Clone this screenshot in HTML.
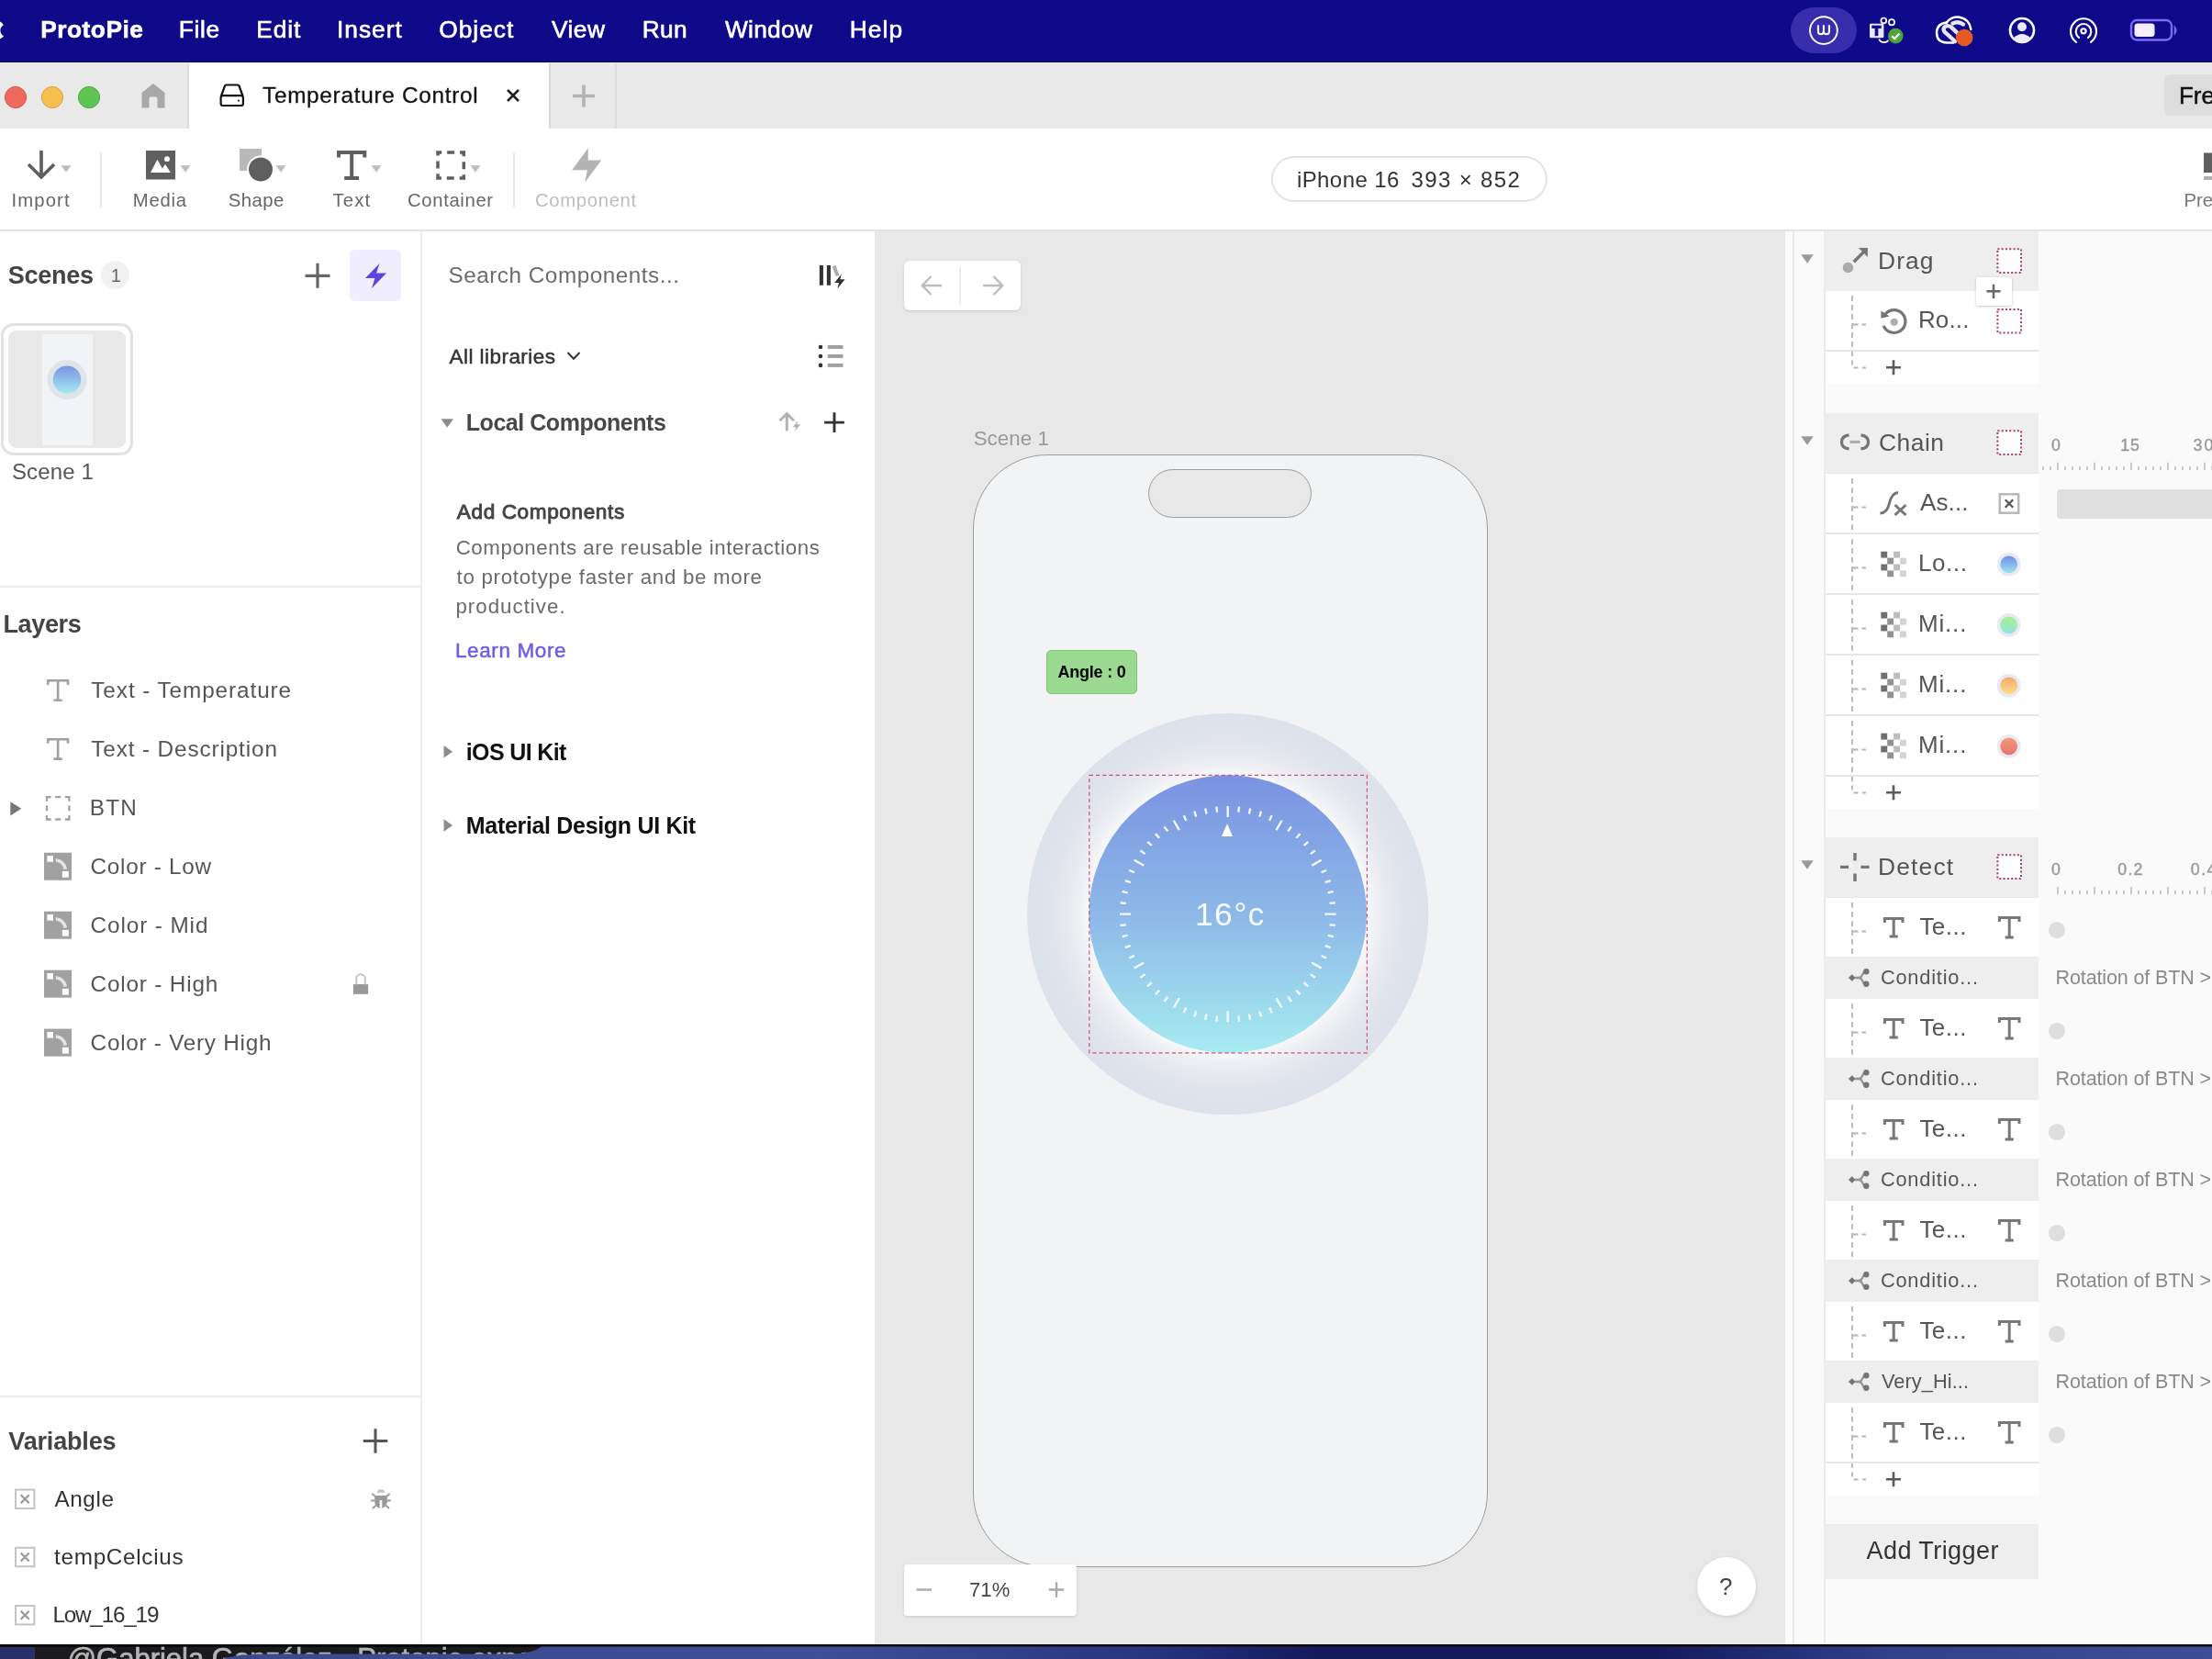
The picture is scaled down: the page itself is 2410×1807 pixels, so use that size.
<!DOCTYPE html>
<html lang="en"><head><meta charset="utf-8"><title>ProtoPie - Temperature Control</title>
<style>
html,body{margin:0;padding:0;}
body{width:2410px;height:1807px;overflow:hidden;background:#fff;position:relative;font-family:"Liberation Sans",sans-serif;}
#app div{position:absolute;box-sizing:border-box;}
#ov{position:absolute;left:0;top:0;will-change:transform;}
#ov text{font-family:"Liberation Sans",sans-serif;white-space:pre;}
</style></head><body>
<div id="app">
<div style="left:0px;top:0px;width:2410px;height:67px;background:#0f0a8a;"></div>
<div style="left:0px;top:66.5px;width:2410px;height:1.5px;background:#0a0745;"></div>
<div style="left:0px;top:68px;width:2410px;height:1.2000000000000028px;background:#f1f1f6;"></div>
<div style="left:1951px;top:8px;width:72px;height:50px;background:rgba(120,105,235,.38);border-radius:25px;"></div>
<div style="left:0px;top:69.2px;width:2410px;height:70.8px;background:#e9e9e9;"></div>
<div style="left:205px;top:69px;width:394px;height:71px;background:#ffffff;"></div>
<div style="left:204px;top:69px;width:2px;height:71px;background:#dcdcdc;"></div>
<div style="left:598px;top:69px;width:2px;height:71px;background:#d8d8d8;"></div>
<div style="left:670px;top:69px;width:2px;height:71px;background:#dadada;"></div>
<div style="left:2358px;top:81px;width:72px;height:45px;background:#dddddd;border-radius:6px;"></div>
<div style="left:0px;top:140px;width:2410px;height:110px;background:#ffffff;"></div>
<div style="left:0px;top:250px;width:2410px;height:2px;background:#e4e4e4;"></div>
<div style="left:109px;top:166px;width:2px;height:60px;background:#e6e6e6;"></div>
<div style="left:559px;top:166px;width:2px;height:60px;background:#e6e6e6;"></div>
<div style="left:1384.5px;top:170px;width:301.0px;height:50px;background:#fff;border:2px solid #e3e3e3;border-radius:25px;"></div>
<div style="left:0px;top:252px;width:458px;height:1539px;background:#ffffff;"></div>
<div style="left:458px;top:252px;width:2px;height:1539px;background:#ececec;"></div>
<div style="left:460px;top:252px;width:493px;height:1539px;background:#ffffff;"></div>
<div style="left:381px;top:272px;width:56px;height:56px;background:#f0eefc;border-radius:6px;"></div>
<div style="left:1px;top:352px;width:144px;height:143.5px;background:#fff;border:3.4px solid #e2e2e2;border-radius:14px;"></div>
<div style="left:8.7px;top:359.8px;width:128.5px;height:128.0px;background:#e8e8e8;border-radius:9px;"></div>
<div style="left:46px;top:364px;width:55px;height:120.5px;background:#f1f3f6;"></div>
<div style="left:0px;top:637.5px;width:458px;height:2.0px;background:#ececec;"></div>
<div style="left:0px;top:1520px;width:458px;height:2px;background:#ececec;"></div>
<div style="left:953px;top:252px;width:992px;height:1539px;background:#e8e8e8;"></div>
<div style="left:985px;top:284px;width:127px;height:54px;background:#fff;border-radius:6px;box-shadow:0 1px 3px rgba(0,0,0,.14);"></div>
<div style="left:1045px;top:290px;width:2px;height:42px;background:#ececec;"></div>
<div style="left:1060px;top:494.5px;width:561px;height:1212.0px;background:#f2f3f5;border:1.3px solid #9c9c9c;border-radius:81px;"></div>
<div style="left:1251px;top:511px;width:178px;height:53px;background:#e8e8e8;border:1.3px solid #9c9c9c;border-radius:27px;"></div>
<div style="left:1140px;top:708px;width:99px;height:47.5px;background:#9ad98f;border:1.2px solid #86c27b;border-radius:5px;"></div>
<div style="left:985px;top:1704px;width:188px;height:55.5px;background:#fff;border-radius:4px;box-shadow:0 1px 3px rgba(0,0,0,.14);"></div>
<div style="left:1849px;top:1696px;width:64px;height:64px;background:#fff;border-radius:32px;box-shadow:0 1px 4px rgba(0,0,0,.13);"></div>
<div style="left:1945px;top:252px;width:8px;height:1539px;background:#fafafa;"></div>
<div style="left:1953px;top:252px;width:2px;height:1539px;background:#e8e8e8;"></div>
<div style="left:1955px;top:252px;width:32px;height:1539px;background:#fafafa;"></div>
<div style="left:1987px;top:252px;width:2px;height:1539px;background:#ebebeb;"></div>
<div style="left:1989px;top:252px;width:421px;height:1539px;background:#fafafa;"></div>
<div style="left:1989px;top:252px;width:232px;height:66px;background:#eeeeee;"></div>
<div style="left:1989px;top:316.5px;width:232px;height:1.5px;background:#e7e7e7;"></div>
<div style="left:1989px;top:317px;width:232px;height:64px;background:#fff;"></div>
<div style="left:1989px;top:381px;width:232px;height:2px;background:#e6e6e8;"></div>
<div style="left:1989px;top:383px;width:232px;height:35px;background:#fff;"></div>
<div style="left:2152.5px;top:302px;width:39.0px;height:30.5px;background:#fff;border-radius:2px;box-shadow:0 1px 3px rgba(0,0,0,.22);"></div>
<div style="left:1989px;top:450px;width:232px;height:66px;background:#eeeeee;"></div>
<div style="left:1989px;top:514.5px;width:232px;height:1.5px;background:#e7e7e7;"></div>
<div style="left:1989px;top:516px;width:232px;height:64px;background:#fff;"></div>
<div style="left:1989px;top:580px;width:232px;height:2px;background:#e6e6e8;"></div>
<div style="left:1989px;top:582px;width:232px;height:64px;background:#fff;"></div>
<div style="left:1989px;top:646px;width:232px;height:2px;background:#e6e6e8;"></div>
<div style="left:1989px;top:648px;width:232px;height:64px;background:#fff;"></div>
<div style="left:1989px;top:712px;width:232px;height:2px;background:#e6e6e8;"></div>
<div style="left:1989px;top:714px;width:232px;height:64px;background:#fff;"></div>
<div style="left:1989px;top:778px;width:232px;height:2px;background:#e6e6e8;"></div>
<div style="left:1989px;top:780px;width:232px;height:64px;background:#fff;"></div>
<div style="left:1989px;top:844px;width:232px;height:2px;background:#e6e6e8;"></div>
<div style="left:1989px;top:846px;width:232px;height:35px;background:#fff;"></div>
<div style="left:2241px;top:533px;width:189px;height:32px;background:#e0e0e0;border-radius:4px;"></div>
<div style="left:1989px;top:912px;width:232px;height:66px;background:#eeeeee;"></div>
<div style="left:1989px;top:976.5px;width:232px;height:1.5px;background:#e7e7e7;"></div>
<div style="left:1989px;top:978px;width:232px;height:64px;background:#fff;"></div>
<div style="left:1989px;top:1042px;width:232px;height:46px;background:#eeeeee;"></div>
<div style="left:1989px;top:1088px;width:232px;height:64px;background:#fff;"></div>
<div style="left:1989px;top:1152px;width:232px;height:46px;background:#eeeeee;"></div>
<div style="left:1989px;top:1198px;width:232px;height:64px;background:#fff;"></div>
<div style="left:1989px;top:1262px;width:232px;height:46px;background:#eeeeee;"></div>
<div style="left:1989px;top:1308px;width:232px;height:64px;background:#fff;"></div>
<div style="left:1989px;top:1372px;width:232px;height:46px;background:#eeeeee;"></div>
<div style="left:1989px;top:1418px;width:232px;height:64px;background:#fff;"></div>
<div style="left:1989px;top:1482px;width:232px;height:46px;background:#eeeeee;"></div>
<div style="left:1989px;top:1528px;width:232px;height:64px;background:#fff;"></div>
<div style="left:1989px;top:1592px;width:232px;height:2px;background:#e6e6e8;"></div>
<div style="left:1989px;top:1594px;width:232px;height:35px;background:#fff;"></div>
<div style="left:1989px;top:1660px;width:232px;height:60px;background:#eeeeee;"></div>
<div style="left:0px;top:1791px;width:2410px;height:2.5px;background:#0a0a10;"></div>
<div style="left:0px;top:1793.5px;width:2410px;height:13.5px;background:linear-gradient(90deg,#2a3068 0,#2a3068 38px,#1b1b1d 38px,#1b1b1d 640px,#141a5c 640px);"></div>
</div>
<svg id="ov" width="2410" height="1807" viewBox="0 0 2410 1807">
<path d="M-4 23Q2 23 3.8 27.2Q0 29.8 0.4 33.5Q0.6 37.5 4 39.3Q2.6 42.6 -4 42.6Z" fill="#fff"/>
<text x="44.2" y="40.8" font-size="26.3" fill="#fff" font-weight="700" textLength="111.7" lengthAdjust="spacing" stroke="#fff" stroke-width="0.6">ProtoPie</text>
<text x="194.8" y="40.8" font-size="26.3" fill="#fff" textLength="44.3" lengthAdjust="spacing" stroke="#fff" stroke-width="0.6">File</text>
<text x="279.3" y="40.8" font-size="26.3" fill="#fff" textLength="47.9" lengthAdjust="spacing" stroke="#fff" stroke-width="0.6">Edit</text>
<text x="367.1" y="40.8" font-size="26.3" fill="#fff" textLength="70.6" lengthAdjust="spacing" stroke="#fff" stroke-width="0.6">Insert</text>
<text x="478.3" y="40.8" font-size="26.3" fill="#fff" textLength="80.9" lengthAdjust="spacing" stroke="#fff" stroke-width="0.6">Object</text>
<text x="600.9" y="40.8" font-size="26.3" fill="#fff" textLength="58.1" lengthAdjust="spacing" stroke="#fff" stroke-width="0.6">View</text>
<text x="699.8" y="40.8" font-size="26.3" fill="#fff" textLength="48.9" lengthAdjust="spacing" stroke="#fff" stroke-width="0.6">Run</text>
<text x="789.9" y="40.8" font-size="26.3" fill="#fff" textLength="95.1" lengthAdjust="spacing" stroke="#fff" stroke-width="0.6">Window</text>
<text x="925.8" y="40.8" font-size="26.3" fill="#fff" textLength="57.3" lengthAdjust="spacing" stroke="#fff" stroke-width="0.6">Help</text>
<circle cx="1986.9" cy="33.1" r="14.9" fill="none" stroke="#fff" stroke-width="1.9"/>
<path d="M1980.9 27.3V34.3Q1980.9 37.3 1983.9 37.3Q1986.9 37.3 1986.9 34.3V27.3M1986.9 34.3Q1986.9 37.3 1989.9 37.3Q1992.9 37.3 1992.9 34.3V27.3" fill="none" stroke="#fff" stroke-width="2"/>
<g fill="none" stroke="#fff" stroke-width="1.7"><circle cx="2052.3" cy="22.4" r="2.9"/><circle cx="2061" cy="24.3" r="3.1"/><path d="M2047.2 42.6Q2048.8 46.3 2053 46.1Q2056.3 45.9 2057.3 43.6"/></g><rect x="2037" y="25.7" width="15.4" height="15.6" rx="1.2" fill="#e9e6ff"/><path d="M2039.3 29.3H2049.7" stroke="#0f0a8a" stroke-width="3.3" fill="none"/><path d="M2044.5 29.3V39.1" stroke="#0f0a8a" stroke-width="3.7" fill="none"/><circle cx="2065.3" cy="39.1" r="8.3" fill="#4ca53a"/><path d="M2061.3 39.3L2064.2 42.2L2069.3 36.4" stroke="#fff" stroke-width="2.2" fill="none"/>
<g fill="none" stroke="#fff" stroke-width="2.5" stroke-linecap="round"><path d="M2128.5 46.6H2121Q2110 46 2110 35.5Q2110.5 25.5 2121 24.5"/><path d="M2120.5 25Q2126 17.5 2135 18.8Q2146 21 2147.3 32"/></g><g fill="none" stroke="#e9e6ff" stroke-width="4.4" stroke-linecap="round"><path d="M2130 45L2118.5 34.5Q2116 30.5 2120 28.5Q2123.5 27.3 2126.5 30.2L2133 36.3"/><path d="M2127.5 25.5Q2133.5 22.5 2139 26.5"/></g><circle cx="2140.2" cy="41" r="9.3" fill="#e55a25"/>
<circle cx="2203" cy="33" r="13" fill="none" stroke="#fff" stroke-width="2.6"/><circle cx="2203" cy="29.3" r="5" fill="#ebe9ff"/><path d="M2193.5 41.5Q2203 32.5 2212.5 41.5Q2208 46 2203 46Q2198 46 2193.5 41.5Z" fill="#ebe9ff"/>
<g fill="none" stroke="#fff" stroke-width="2.1" stroke-linecap="round"><circle cx="2270" cy="33.8" r="2.6"/><path d="M2265 41A8.3 8.3 0 1 1 2275 41"/><path d="M2262 45.8A14 14 0 1 1 2278 45.8"/></g>
<rect x="2322" y="22" width="44" height="21.5" rx="6" fill="none" stroke="#7a6cf5" stroke-width="2.4"/><rect x="2325.5" y="25.5" width="22" height="14.5" rx="3.5" fill="#f3efff"/><path d="M2369.5 29.5Q2372 33 2369.5 36.5Z" fill="#7a6cf5" stroke="#7a6cf5" stroke-width="1.5"/>
<circle cx="17" cy="106" r="11.6" fill="#ee6a5f" stroke="#d5554b" stroke-width="1"/>
<circle cx="57" cy="106" r="11.6" fill="#f5be4f" stroke="#d9a23c" stroke-width="1"/>
<circle cx="97" cy="106" r="11.6" fill="#5fc454" stroke="#4aa640" stroke-width="1"/>
<path d="M154.5 117.5V101L167 91L179.5 101V117.5H171.5V107.5Q171.5 105.5 169.5 105.5H164.5Q162.5 105.5 162.5 107.5V117.5Z" fill="#a8a8a8"/>
<path d="M241 104.5L245 93.5Q245.5 92.5 246.5 92.5H259Q260 92.5 260.5 93.5L264.5 104.5" fill="none" stroke="#111" stroke-width="2.2"/><rect x="240.6" y="104.2" width="24.3" height="10.8" rx="2.3" fill="none" stroke="#111" stroke-width="2.2"/><rect x="259" y="108.7" width="1.8" height="1.8" fill="#111"/>
<text x="286.0" y="112.1" font-size="24.3" fill="#111" textLength="234.7" lengthAdjust="spacing" stroke="#111" stroke-width="0.3">Temperature Control</text>
<path d="M553 98L565 110M565 98L553 110" stroke="#222" stroke-width="2.6" fill="none"/>
<path d="M624 104.5H648M636 92.5V116.5" stroke="#b3b3b3" stroke-width="3.7" fill="none"/>
<text x="2373.9" y="112.6" font-size="26" fill="#111" stroke="#111" stroke-width="0.5">Free</text>
<path d="M45 164V192.5M31 179L45 193L59 179" fill="none" stroke="#5f5f5f" stroke-width="3.7"/>
<path d="M66.5 180.25H77.5L72 187.75Z" fill="#bdbdbd"/>
<text x="12.6" y="224.8" font-size="20.3" fill="#666" textLength="63.0" lengthAdjust="spacing">Import</text>
<rect x="159" y="164" width="32" height="31.5" fill="#5f5f5f"/><path d="M164 188L171.4 173.8L176.8 183.4L180 179L186 188Z" fill="#fff"/><circle cx="182" cy="173.2" r="2.9" fill="#fff"/>
<path d="M196.5 180.25H207.5L202 187.75Z" fill="#bdbdbd"/>
<text x="144.8" y="224.8" font-size="20.3" fill="#666" textLength="58.2" lengthAdjust="spacing">Media</text>
<rect x="261" y="162" width="24" height="24" fill="#b9b9b9"/><circle cx="284" cy="184.5" r="15" fill="#fff"/><circle cx="284" cy="184.5" r="13" fill="#5f5f5f"/>
<path d="M300.5 180.25H311.5L306 187.75Z" fill="#bdbdbd"/>
<text x="248.8" y="224.8" font-size="20.3" fill="#666" textLength="60.6" lengthAdjust="spacing">Shape</text>
<path d="M369 171.5V166.1H397.3V171.5M383.2 166.1V194M375.2 194H391" fill="none" stroke="#5f5f5f" stroke-width="4"/>
<path d="M404.5 180.25H415.5L410 187.75Z" fill="#bdbdbd"/>
<text x="362.5" y="224.8" font-size="20.3" fill="#666" textLength="40.6" lengthAdjust="spacing">Text</text>
<rect x="477" y="166.1" width="28.3" height="27.9" fill="none" stroke="#5f5f5f" stroke-width="3.5" stroke-dasharray="8.5 5.9 8 5.9" stroke-dashoffset="4.25"/>
<path d="M512.5 180.25H523.5L518 187.75Z" fill="#bdbdbd"/>
<text x="444.0" y="224.8" font-size="20.3" fill="#666" textLength="93.1" lengthAdjust="spacing">Container</text>
<path d="M640.7 161.2L623.2 185.2H639.8L637.3 198.6L655.3 174.6H640.7Z" fill="#b3b3b3"/>
<text x="583.0" y="224.8" font-size="20.3" fill="#bdbdbd" textLength="110.2" lengthAdjust="spacing">Component</text>
<text x="1412.9" y="203.6" font-size="24" fill="#333" textLength="111.5" lengthAdjust="spacing">iPhone 16</text>
<text x="1537.6" y="203.6" font-size="24" fill="#333" textLength="118.2" lengthAdjust="spacing">393 × 852</text>
<rect x="2401" y="166.5" width="20" height="21.5" fill="#5f5f5f"/><rect x="2401" y="192" width="20" height="4" fill="#b0b0b0"/>
<text x="2379.5" y="224.9" font-size="20.3" fill="#777">Preview</text>
<text x="8.7" y="309.2" font-size="27" fill="#444" font-weight="700" textLength="93.4" lengthAdjust="spacing">Scenes</text>
<circle cx="125.5" cy="299.5" r="15.4" fill="#f1f1f1"/>
<text x="120.7" y="306.7" font-size="20" fill="#666">1</text>
<path d="M332.5 300.3H359.5M346 286.8V313.8" stroke="#666" stroke-width="3.2" fill="none"/>
<path d="M413.5 287L398 303H408.5L405 314L421 297.5H410Z" fill="#5b45e0"/>
<defs><linearGradient id="gb" x1="0" y1="0" x2="0" y2="1"><stop offset="0" stop-color="#7a93e2"/><stop offset="1" stop-color="#a5ebf0"/></linearGradient></defs>
<circle cx="73" cy="413.6" r="21.5" fill="#dfe3ea"/><circle cx="73" cy="413.6" r="15.2" fill="url(#gb)"/>
<text x="12.9" y="522.1" font-size="24" fill="#555" textLength="89.0" lengthAdjust="spacing">Scene 1</text>
<text x="3.4" y="689.4" font-size="27" fill="#444" font-weight="700" textLength="85.4" lengthAdjust="spacing">Layers</text>
<text x="99.3" y="760.2" font-size="24.3" fill="#555" textLength="217.8" lengthAdjust="spacing">Text - Temperature</text>
<path d="M52.2 745.9V741.3H74.0V745.9M63.1 741.3V762.7M58.5 762.7H67.7" fill="none" stroke="#a1a1a1" stroke-width="2.6"/>
<text x="99.3" y="824.1" font-size="24.3" fill="#555" textLength="202.6" lengthAdjust="spacing">Text - Description</text>
<path d="M52.2 809.85V805.25H74.0V809.85M63.1 805.25V826.6500000000001M58.5 826.6500000000001H67.7" fill="none" stroke="#a1a1a1" stroke-width="2.6"/>
<text x="97.8" y="888.1" font-size="24.3" fill="#555" textLength="50.9" lengthAdjust="spacing">BTN</text>
<rect x="51" y="868.1" width="24.4" height="24.4" fill="none" stroke="#a1a1a1" stroke-width="2.3" stroke-dasharray="9.2 4.6 6 4.6" stroke-dashoffset="4.6"/>
<path d="M11.3 873.1999999999999V888.4L23.3 880.8Z" fill="#777"/>
<text x="98.6" y="952.0" font-size="24.3" fill="#555" textLength="131.4" lengthAdjust="spacing">Color - Low</text>
<rect x="48" y="928.75" width="30" height="30" fill="#a1a1a1"/><rect x="51.4" y="932.15" width="6.6" height="6.6" fill="#fff"/><rect x="67.8" y="948.95" width="7" height="6.8" fill="#fff"/><path d="M60.8 936.95Q69.6 937.95 71.2 946.75" fill="none" stroke="#e2e2e2" stroke-width="3.8"/>
<text x="98.6" y="1016.0" font-size="24.3" fill="#555" textLength="127.8" lengthAdjust="spacing">Color - Mid</text>
<rect x="48" y="992.6999999999999" width="30" height="30" fill="#a1a1a1"/><rect x="51.4" y="996.0999999999999" width="6.6" height="6.6" fill="#fff"/><rect x="67.8" y="1012.9" width="7" height="6.8" fill="#fff"/><path d="M60.8 1000.9Q69.6 1001.9 71.2 1010.6999999999999" fill="none" stroke="#e2e2e2" stroke-width="3.8"/>
<text x="98.6" y="1079.9" font-size="24.3" fill="#555" textLength="138.7" lengthAdjust="spacing">Color - High</text>
<rect x="48" y="1056.65" width="30" height="30" fill="#a1a1a1"/><rect x="51.4" y="1060.0500000000002" width="6.6" height="6.6" fill="#fff"/><rect x="67.8" y="1076.8500000000001" width="7" height="6.8" fill="#fff"/><path d="M60.8 1064.8500000000001Q69.6 1065.8500000000001 71.2 1074.65" fill="none" stroke="#e2e2e2" stroke-width="3.8"/>
<text x="98.6" y="1143.9" font-size="24.3" fill="#555" textLength="196.8" lengthAdjust="spacing">Color - Very High</text>
<rect x="48" y="1120.6000000000001" width="30" height="30" fill="#a1a1a1"/><rect x="51.4" y="1124.0000000000002" width="6.6" height="6.6" fill="#fff"/><rect x="67.8" y="1140.8000000000002" width="7" height="6.8" fill="#fff"/><path d="M60.8 1128.8000000000002Q69.6 1129.8000000000002 71.2 1138.6000000000001" fill="none" stroke="#e2e2e2" stroke-width="3.8"/>
<rect x="385" y="1072" width="16.1" height="10.8" fill="#999"/><path d="M388.3 1072.5V1066A4.7 4.7 0 0 1 397.7 1066V1072.5" fill="none" stroke="#c2c2c2" stroke-width="1.9"/>
<text x="9.3" y="1578.7" font-size="27" fill="#444" font-weight="700" textLength="117.2" lengthAdjust="spacing">Variables</text>
<path d="M395.7 1569.5H422.3M409 1556.2V1582.8" stroke="#555" stroke-width="3" fill="none"/>
<rect x="17" y="1622.6" width="20.4" height="20.4" fill="none" stroke="#c4c4c4" stroke-width="2"/><path d="M22.7 1628.3L31.7 1637.3M31.7 1628.3L22.7 1637.3" stroke="#999" stroke-width="2.2" fill="none"/>
<text x="59.5" y="1640.9" font-size="24.3" fill="#333" textLength="64.4" lengthAdjust="spacing">Angle</text>
<rect x="17" y="1685.8" width="20.4" height="20.4" fill="none" stroke="#c4c4c4" stroke-width="2"/><path d="M22.7 1691.5L31.7 1700.5M31.7 1691.5L22.7 1700.5" stroke="#999" stroke-width="2.2" fill="none"/>
<text x="59.1" y="1704.1" font-size="24.3" fill="#333" textLength="140.5" lengthAdjust="spacing">tempCelcius</text>
<rect x="17" y="1749.0" width="20.4" height="20.4" fill="none" stroke="#c4c4c4" stroke-width="2"/><path d="M22.7 1754.7L31.7 1763.7M31.7 1754.7L22.7 1763.7" stroke="#999" stroke-width="2.2" fill="none"/>
<text x="57.5" y="1767.3" font-size="24.3" fill="#333" textLength="115.9" lengthAdjust="spacing">Low_16_19</text>
<path d="M410.9 1625.9A4.1 3.9 0 0 1 419.1 1625.9Z" fill="#c8c8c8"/><path d="M408.2 1628.9H421.9V1636.5Q421 1641 416.3 1643V1634H413.7V1643Q409 1641 408.2 1636.5Z" fill="#999"/><path d="M405.3 1626.9L408.8 1629.8M424.7 1626.9L421.2 1629.8M404.2 1634.5H408.4M425.8 1634.5H421.6M406 1643L409.6 1639.6M424 1643L420.4 1639.6" stroke="#999" stroke-width="1.9" fill="none"/>
<text x="488.5" y="308.2" font-size="24.3" fill="#6b6b6b" textLength="251.5" lengthAdjust="spacing">Search Components...</text>
<path d="M894.9 289V310.7M902.9 289V310.7" stroke="#333" stroke-width="4.1" fill="none"/><path d="M908.6 289.6L912.6 300.3" stroke="#aaa" stroke-width="3.8" fill="none"/><path d="M916.8 298.4L909.2 308H914L912.4 314.5L920.6 304.3H915.4Z" fill="#333"/>
<text x="489.6" y="396.1" font-size="22.5" fill="#333" textLength="115.3" lengthAdjust="spacing" stroke="#333" stroke-width="0.5">All libraries</text>
<path d="M618.5 384L625 390.8L631.5 384" stroke="#333" stroke-width="2" fill="none"/>
<circle cx="894" cy="378.0" r="2.3" fill="#333"/><rect x="901.8" y="376.0" width="16.7" height="4" fill="#a0a0a0"/>
<circle cx="894" cy="387.95" r="2.3" fill="#333"/><rect x="901.8" y="385.95" width="16.7" height="4" fill="#a0a0a0"/>
<circle cx="894" cy="397.9" r="2.3" fill="#333"/><rect x="901.8" y="395.9" width="16.7" height="4" fill="#a0a0a0"/>
<path d="M480.45 456.25H493.95L487.2 465.75Z" fill="#8c8c8c"/>
<text x="507.8" y="468.9" font-size="25" fill="#484848" font-weight="700" textLength="218.0" lengthAdjust="spacing">Local Components</text>
<path d="M857.3 469.2V450.5M849.6 458.2L857.3 450.5L865 458.2" stroke="#b2b2b2" stroke-width="3" fill="none"/><path d="M869 458.3L863.8 465.3H867.2L866 469.8L872.2 462.3H868.4Z" fill="#b2b2b2"/>
<path d="M898.1 460.1H919.9M909 449.20000000000005V471.0" stroke="#333" stroke-width="2.9" fill="none"/>
<text x="497.8" y="564.5" font-size="22.6" fill="#444" textLength="182.4" lengthAdjust="spacing" stroke="#444" stroke-width="0.9">Add Components</text>
<text x="496.7" y="604.4" font-size="22.3" fill="#6a6a6a" textLength="396.1" lengthAdjust="spacing">Components are reusable interactions</text>
<text x="497.5" y="636.0" font-size="22.3" fill="#6a6a6a" textLength="332.5" lengthAdjust="spacing">to prototype faster and be more</text>
<text x="496.4" y="667.7" font-size="22.3" fill="#6a6a6a" textLength="119.2" lengthAdjust="spacing">productive.</text>
<text x="496.0" y="716.1" font-size="22.5" fill="#6b5ce7" textLength="120.5" lengthAdjust="spacing" stroke="#6b5ce7" stroke-width="0.5">Learn More</text>
<path d="M483.55 812.05V825.55L493.05 818.8Z" fill="#8c8c8c"/>
<text x="507.8" y="827.8" font-size="25" fill="#111" font-weight="700" textLength="109.6" lengthAdjust="spacing">iOS UI Kit</text>
<path d="M483.55 892.25V905.75L493.05 899Z" fill="#8c8c8c"/>
<text x="507.8" y="908.0" font-size="25" fill="#111" font-weight="700" textLength="250.3" lengthAdjust="spacing">Material Design UI Kit</text>
<g fill="none" stroke="#bdbdbd" stroke-width="2.5"><path d="M1026 311H1005M1014.5 301L1004.8 311L1014.5 321"/><path d="M1071 311H1092M1082.5 301L1092.2 311L1082.5 321"/></g>
<text x="1060.7" y="485.0" font-size="22.3" fill="#999" textLength="82.1" lengthAdjust="spacing">Scene 1</text>
<text x="1152.4" y="737.7" font-size="18" fill="#000" font-weight="700" textLength="74.4" lengthAdjust="spacing">Angle : 0</text>
<defs><radialGradient id="glow" cx="0.5" cy="0.5" r="0.5"><stop offset="0.69" stop-color="#f7f8fa"/><stop offset="0.73" stop-color="#f0f2f5"/><stop offset="0.8" stop-color="#e6e9ee"/><stop offset="0.9" stop-color="#dfe3ea"/><stop offset="1" stop-color="#dde1e9"/></radialGradient><linearGradient id="dial" x1="0" y1="0" x2="0" y2="1"><stop offset="0" stop-color="#7a93e2"/><stop offset="0.5" stop-color="#8db8e8"/><stop offset="1" stop-color="#a6ecf0"/></linearGradient></defs>
<circle cx="1337.7" cy="995.6" r="218.5" fill="url(#glow)"/>
<circle cx="1337.7" cy="995.6" r="151.3" fill="url(#dial)"/>
<path d="M1337.7 889.9L1337.7 877.9M1349.4 884.7L1350.0 878.5M1360.9 886.5L1362.2 880.5M1372.2 889.6L1374.1 883.7M1383.1 893.7L1385.6 888.1M1390.5 904.1L1396.5 893.7M1403.2 905.4L1406.9 900.4M1412.3 912.7L1416.5 908.1M1420.6 921.0L1425.2 916.8M1427.9 930.1L1432.9 926.4M1429.2 942.8L1439.6 936.8M1439.6 950.2L1445.2 947.7M1443.7 961.1L1449.6 959.2M1446.8 972.4L1452.8 971.1M1448.6 983.9L1454.8 983.3M1443.4 995.6L1455.4 995.6M1448.6 1007.3L1454.8 1007.9M1446.8 1018.8L1452.8 1020.1M1443.7 1030.1L1449.6 1032.0M1439.6 1041.0L1445.2 1043.5M1429.2 1048.5L1439.6 1054.5M1427.9 1061.1L1432.9 1064.8M1420.6 1070.2L1425.2 1074.4M1412.3 1078.5L1416.5 1083.1M1403.2 1085.8L1406.9 1090.8M1390.5 1087.1L1396.5 1097.5M1383.1 1097.5L1385.6 1103.1M1372.2 1101.6L1374.1 1107.5M1360.9 1104.7L1362.2 1110.7M1349.4 1106.5L1350.0 1112.7M1337.7 1101.3L1337.7 1113.3M1326.0 1106.5L1325.4 1112.7M1314.5 1104.7L1313.2 1110.7M1303.2 1101.6L1301.3 1107.5M1292.3 1097.5L1289.8 1103.1M1284.9 1087.1L1278.9 1097.5M1272.2 1085.8L1268.5 1090.8M1263.1 1078.5L1258.9 1083.1M1254.8 1070.2L1250.2 1074.4M1247.5 1061.1L1242.5 1064.8M1246.2 1048.5L1235.8 1054.5M1235.8 1041.0L1230.2 1043.5M1231.7 1030.1L1225.8 1032.0M1228.6 1018.8L1222.6 1020.1M1226.8 1007.3L1220.6 1007.9M1232.0 995.6L1220.0 995.6M1226.8 983.9L1220.6 983.3M1228.6 972.4L1222.6 971.1M1231.7 961.1L1225.8 959.2M1235.8 950.2L1230.2 947.7M1246.2 942.8L1235.8 936.8M1247.5 930.1L1242.5 926.4M1254.8 921.0L1250.2 916.8M1263.1 912.7L1258.9 908.1M1272.2 905.4L1268.5 900.4M1284.8 904.1L1278.8 893.7M1292.3 893.7L1289.8 888.1M1303.2 889.6L1301.3 883.7M1314.5 886.5L1313.2 880.5M1326.0 884.7L1325.4 878.5" stroke="#fff" stroke-width="2.3" fill="none" opacity=".95"/>
<path d="M1337.0 897.2L1330.9 911H1343.1000000000001Z" fill="#fff"/>
<text x="1302.1" y="1008.3" font-size="35.6" fill="#fff" textLength="75.3" lengthAdjust="spacing" fill-opacity="0.93">16°c</text>
<rect x="1186.8" y="844.3" width="302.6" height="302.6" fill="none" stroke="#cf4f79" stroke-width="1.15" stroke-dasharray="4.2 3"/>
<path d="M998.5 1731.5H1015" stroke="#aaa" stroke-width="2.4"/>
<path d="M1142.8 1731.5H1159.2M1151 1723.3V1739.7" stroke="#aaa" stroke-width="2.4" fill="none"/>
<text x="1055.9" y="1738.9" font-size="22" fill="#444" textLength="44.4" lengthAdjust="spacing">71%</text>
<text x="1872.9" y="1736.8" font-size="26" fill="#444">?</text>
<defs><linearGradient id="cLo" x1="0" y1="0" x2="0" y2="1"><stop offset="0" stop-color="#6f8fe6"/><stop offset="1" stop-color="#9fe0f2"/></linearGradient><linearGradient id="cM1" x1="0" y1="0" x2="0" y2="1"><stop offset="0" stop-color="#a6f08c"/><stop offset="1" stop-color="#8fe6e0"/></linearGradient><linearGradient id="cM2" x1="0" y1="0" x2="0" y2="1"><stop offset="0" stop-color="#f5a66e"/><stop offset="1" stop-color="#fae08a"/></linearGradient><linearGradient id="cM3" x1="0" y1="0" x2="0" y2="1"><stop offset="0" stop-color="#f59a78"/><stop offset="1" stop-color="#e87272"/></linearGradient></defs>
<path d="M1962.25 277.15H1975.75L1969 286.65Z" fill="#9a9a9a"/>
<text x="2046.1" y="293.4" font-size="26.4" fill="#555" textLength="60.3" lengthAdjust="spacing">Drag</text>
<rect x="2176.4" y="271.29999999999995" width="25.6" height="25.6" fill="#fff" stroke="#ad3a62" stroke-width="2" stroke-dasharray="2 2.29"/>
<circle cx="2013.5" cy="291.4" r="5.7" fill="#aaa"/><path d="M2019.8 285.2L2030.5 274.4" stroke="#757575" stroke-width="3.4" fill="none"/><path d="M2025 270.0H2034.9V279.9Z" fill="#757575"/>
<path d="M2018 322V378" stroke="#b4b4b4" stroke-width="1.8" fill="none" stroke-dasharray="6 4"/><path d="M2019 353.5H2033" stroke="#b4b4b4" stroke-width="1.8" fill="none" stroke-dasharray="5.5 4"/>
<text x="2089.9" y="357.4" font-size="26" fill="#555" textLength="55.5" lengthAdjust="spacing">Ro...</text>
<path d="M2054.1 342A12.4 12.4 0 1 1 2052.1 354.8" fill="none" stroke="#757575" stroke-width="3.2"/><path d="M2049.4 338.6V346.8L2058.6 344.4Z" fill="#757575"/><circle cx="2063.7" cy="350.8" r="4.1" fill="#aeaeae"/>
<rect x="2176.4" y="336.9" width="25.6" height="25.6" fill="#fff" stroke="#ad3a62" stroke-width="2" stroke-dasharray="2 2.29"/>
<path d="M2018 383V400.5H2033" stroke="#b4b4b4" stroke-width="1.8" fill="none" stroke-dasharray="5 4.5"/>
<path d="M2055 400.3H2071M2063 392.3V408.3" stroke="#5a5a5a" stroke-width="2.6" fill="none"/>
<path d="M2164.4 317.3H2179.6M2172 309.7V324.90000000000003" stroke="#666" stroke-width="2.5" fill="none"/>
<path d="M1962.25 475.15H1975.75L1969 484.65Z" fill="#9a9a9a"/>
<text x="2047.0" y="491.4" font-size="26.4" fill="#555" textLength="71.0" lengthAdjust="spacing">Chain</text>
<rect x="2176.4" y="469.29999999999995" width="25.6" height="25.6" fill="#fff" stroke="#ad3a62" stroke-width="2" stroke-dasharray="2 2.29"/>
<g fill="none" stroke="#757575" stroke-width="3.2"><path d="M2014.5 473.9Q2006.5 474.9 2006.5 481.4Q2006.5 487.9 2014.5 488.9"/><path d="M2027.5 473.9Q2035.5 474.9 2035.5 481.4Q2035.5 487.9 2027.5 488.9"/></g><path d="M2015.5 481.4H2026.5" stroke="#aaa" stroke-width="3"/>
<path d="M2018 521V577" stroke="#b4b4b4" stroke-width="1.8" fill="none" stroke-dasharray="6 4"/><path d="M2019 552.5H2033" stroke="#b4b4b4" stroke-width="1.8" fill="none" stroke-dasharray="5.5 4"/>
<text x="2091.9" y="556.4" font-size="26" fill="#555" textLength="52.6" lengthAdjust="spacing">As...</text>
<path d="M2048.5 559Q2056 559 2058.5 548Q2061 537 2068 536.5" fill="none" stroke="#757575" stroke-width="3"/><path d="M2064.5 550L2076.5 561M2076.5 550L2064.5 561" stroke="#757575" stroke-width="3" fill="none"/>
<rect x="2178.8" y="538.3" width="20.4" height="20.4" fill="#fff" stroke="#b8b8b8" stroke-width="2.5"/><path d="M2184.8 544.3L2193.2 552.7M2193.2 544.3L2184.8 552.7" stroke="#555" stroke-width="2.3" fill="none"/>
<path d="M2018 587V643" stroke="#b4b4b4" stroke-width="1.8" fill="none" stroke-dasharray="6 4"/><path d="M2019 618.5H2033" stroke="#b4b4b4" stroke-width="1.8" fill="none" stroke-dasharray="5.5 4"/>
<text x="2089.9" y="622.4" font-size="26" fill="#555" textLength="53.0" lengthAdjust="spacing">Lo...</text>
<rect x="2049.3" y="600.7" width="6.9" height="6.9" fill="#707070"/><rect x="2063.1" y="600.7" width="6.9" height="6.9" fill="#bdbdbd"/><rect x="2056.2" y="607.6" width="6.9" height="6.9" fill="#929292"/><rect x="2070.0" y="607.6" width="6.9" height="6.9" fill="#d4d4d4"/><rect x="2049.3" y="614.5" width="6.9" height="6.9" fill="#707070"/><rect x="2063.1" y="614.5" width="6.9" height="6.9" fill="#bdbdbd"/><rect x="2056.2" y="621.4" width="6.9" height="6.9" fill="#929292"/><rect x="2070.0" y="621.4" width="6.9" height="6.9" fill="#d4d4d4"/>
<circle cx="2188.7" cy="614.8" r="12.9" fill="#e9e9f5"/><circle cx="2188.7" cy="614.8" r="9.4" fill="url(#cLo)"/>
<path d="M2018 653V709" stroke="#b4b4b4" stroke-width="1.8" fill="none" stroke-dasharray="6 4"/><path d="M2019 684.5H2033" stroke="#b4b4b4" stroke-width="1.8" fill="none" stroke-dasharray="5.5 4"/>
<text x="2089.9" y="688.4" font-size="26" fill="#555" textLength="52.5" lengthAdjust="spacing">Mi...</text>
<rect x="2049.3" y="666.7" width="6.9" height="6.9" fill="#707070"/><rect x="2063.1" y="666.7" width="6.9" height="6.9" fill="#bdbdbd"/><rect x="2056.2" y="673.6" width="6.9" height="6.9" fill="#929292"/><rect x="2070.0" y="673.6" width="6.9" height="6.9" fill="#d4d4d4"/><rect x="2049.3" y="680.5" width="6.9" height="6.9" fill="#707070"/><rect x="2063.1" y="680.5" width="6.9" height="6.9" fill="#bdbdbd"/><rect x="2056.2" y="687.4" width="6.9" height="6.9" fill="#929292"/><rect x="2070.0" y="687.4" width="6.9" height="6.9" fill="#d4d4d4"/>
<circle cx="2188.7" cy="680.8" r="12.9" fill="#e9e9f5"/><circle cx="2188.7" cy="680.8" r="9.4" fill="url(#cM1)"/>
<path d="M2018 719V775" stroke="#b4b4b4" stroke-width="1.8" fill="none" stroke-dasharray="6 4"/><path d="M2019 750.5H2033" stroke="#b4b4b4" stroke-width="1.8" fill="none" stroke-dasharray="5.5 4"/>
<text x="2089.9" y="754.4" font-size="26" fill="#555" textLength="52.5" lengthAdjust="spacing">Mi...</text>
<rect x="2049.3" y="732.7" width="6.9" height="6.9" fill="#707070"/><rect x="2063.1" y="732.7" width="6.9" height="6.9" fill="#bdbdbd"/><rect x="2056.2" y="739.6" width="6.9" height="6.9" fill="#929292"/><rect x="2070.0" y="739.6" width="6.9" height="6.9" fill="#d4d4d4"/><rect x="2049.3" y="746.5" width="6.9" height="6.9" fill="#707070"/><rect x="2063.1" y="746.5" width="6.9" height="6.9" fill="#bdbdbd"/><rect x="2056.2" y="753.4" width="6.9" height="6.9" fill="#929292"/><rect x="2070.0" y="753.4" width="6.9" height="6.9" fill="#d4d4d4"/>
<circle cx="2188.7" cy="746.8" r="12.9" fill="#e9e9f5"/><circle cx="2188.7" cy="746.8" r="9.4" fill="url(#cM2)"/>
<path d="M2018 785V841" stroke="#b4b4b4" stroke-width="1.8" fill="none" stroke-dasharray="6 4"/><path d="M2019 816.5H2033" stroke="#b4b4b4" stroke-width="1.8" fill="none" stroke-dasharray="5.5 4"/>
<text x="2089.9" y="820.4" font-size="26" fill="#555" textLength="52.5" lengthAdjust="spacing">Mi...</text>
<rect x="2049.3" y="798.7" width="6.9" height="6.9" fill="#707070"/><rect x="2063.1" y="798.7" width="6.9" height="6.9" fill="#bdbdbd"/><rect x="2056.2" y="805.6" width="6.9" height="6.9" fill="#929292"/><rect x="2070.0" y="805.6" width="6.9" height="6.9" fill="#d4d4d4"/><rect x="2049.3" y="812.5" width="6.9" height="6.9" fill="#707070"/><rect x="2063.1" y="812.5" width="6.9" height="6.9" fill="#bdbdbd"/><rect x="2056.2" y="819.4" width="6.9" height="6.9" fill="#929292"/><rect x="2070.0" y="819.4" width="6.9" height="6.9" fill="#d4d4d4"/>
<circle cx="2188.7" cy="812.8" r="12.9" fill="#e9e9f5"/><circle cx="2188.7" cy="812.8" r="9.4" fill="url(#cM3)"/>
<path d="M2018 846V863.5H2033" stroke="#b4b4b4" stroke-width="1.8" fill="none" stroke-dasharray="5 4.5"/>
<path d="M2055 863.3H2071M2063 855.3V871.3" stroke="#5a5a5a" stroke-width="2.6" fill="none"/>
<path d="M2226 507.7V512M2234 507.7V512M2242 503.7V512M2250 507.7V512M2258 507.7V512M2266 507.7V512M2274 507.7V512M2282 503.7V512M2290 507.7V512M2298 507.7V512M2306 507.7V512M2314 507.7V512M2322 503.7V512M2330 507.7V512M2338 507.7V512M2346 507.7V512M2354 507.7V512M2362 503.7V512M2370 507.7V512M2378 507.7V512M2386 507.7V512M2394 507.7V512M2402 503.7V512M2410 507.7V512" stroke="#c4c4c4" stroke-width="1.8" fill="none"/>
<text x="2234.9" y="490.8" font-size="17.8" fill="#999" stroke="#999" stroke-width="0.4">0</text>
<text x="2310.3" y="490.8" font-size="17.8" fill="#999" textLength="20.6" lengthAdjust="spacing" stroke="#999" stroke-width="0.4">15</text>
<text x="2389.4" y="490.8" font-size="17.8" fill="#999" textLength="22.1" lengthAdjust="spacing" stroke="#999" stroke-width="0.4">30</text>
<path d="M1962.25 937.15H1975.75L1969 946.65Z" fill="#9a9a9a"/>
<text x="2046.1" y="953.4" font-size="26.4" fill="#555" textLength="82.0" lengthAdjust="spacing">Detect</text>
<rect x="2176.4" y="931.3000000000001" width="25.6" height="25.6" fill="#fff" stroke="#ad3a62" stroke-width="2" stroke-dasharray="2 2.29"/>
<path d="M2005 944.4H2014M2027.5 944.4H2036.5M2021 928.9V937.4M2021 951.4V959.9" stroke="#757575" stroke-width="3.4" fill="none"/>
<path d="M2242 966.0V974.3M2250 970.0V974.3M2258 970.0V974.3M2266 970.0V974.3M2274 970.0V974.3M2282 966.0V974.3M2290 970.0V974.3M2298 970.0V974.3M2306 970.0V974.3M2314 970.0V974.3M2322 966.0V974.3M2330 970.0V974.3M2338 970.0V974.3M2346 970.0V974.3M2354 970.0V974.3M2362 966.0V974.3M2370 970.0V974.3M2378 970.0V974.3M2386 970.0V974.3M2394 970.0V974.3M2402 966.0V974.3M2410 970.0V974.3" stroke="#c4c4c4" stroke-width="1.8" fill="none"/>
<text x="2234.9" y="953.1" font-size="17.8" fill="#999" stroke="#999" stroke-width="0.4">0</text>
<text x="2307.3" y="953.1" font-size="17.8" fill="#999" textLength="27.2" lengthAdjust="spacing" stroke="#999" stroke-width="0.4">0.2</text>
<text x="2386.8" y="953.1" font-size="17.8" fill="#999" textLength="27.7" lengthAdjust="spacing" stroke="#999" stroke-width="0.4">0.4</text>
<path d="M2018 983V1039" stroke="#b4b4b4" stroke-width="1.8" fill="none" stroke-dasharray="6 4"/><path d="M2019 1014.5H2033" stroke="#b4b4b4" stroke-width="1.8" fill="none" stroke-dasharray="5.5 4"/>
<text x="2091.4" y="1018.4" font-size="26" fill="#555" textLength="51.0" lengthAdjust="spacing">Te...</text>
<path d="M2053.3999999999996 1005.1V1000.5H2073.0V1005.1M2063.2 1000.5V1020.0999999999999M2058.6 1020.0999999999999H2067.7999999999997" fill="none" stroke="#777" stroke-width="3"/>
<path d="M2178.3999999999996 1004.1V999.5H2200.0V1004.1M2189.2 999.5V1021.0999999999999M2184.6 1021.0999999999999H2193.7999999999997" fill="none" stroke="#777" stroke-width="3"/>
<circle cx="2241" cy="1013" r="9.1" fill="#dedede"/>
<path d="M2017.8 1061.2L2021.6 1065L2017.8 1068.8L2014 1065Z" fill="#757575"/><path d="M2021 1065H2025Q2027.5 1065 2029 1062L2031 1058.2M2025 1065Q2027.5 1065 2029 1068L2031 1071.8" fill="none" stroke="#959595" stroke-width="2.3"/><circle cx="2033.3" cy="1058.2" r="3.2" fill="#757575"/><circle cx="2033.3" cy="1071.8" r="3.2" fill="#757575"/>
<text x="2048.9" y="1072.3" font-size="21.8" fill="#555" textLength="106.1" lengthAdjust="spacing">Conditio...</text>
<text x="2239.6" y="1072.4" font-size="21.5" fill="#8a8a8a" textLength="169.4" lengthAdjust="spacing">Rotation of BTN &gt;</text>
<path d="M2018 1093V1149" stroke="#b4b4b4" stroke-width="1.8" fill="none" stroke-dasharray="6 4"/><path d="M2019 1124.5H2033" stroke="#b4b4b4" stroke-width="1.8" fill="none" stroke-dasharray="5.5 4"/>
<text x="2091.4" y="1128.4" font-size="26" fill="#555" textLength="51.0" lengthAdjust="spacing">Te...</text>
<path d="M2053.3999999999996 1115.1V1110.5H2073.0V1115.1M2063.2 1110.5V1130.1M2058.6 1130.1H2067.7999999999997" fill="none" stroke="#777" stroke-width="3"/>
<path d="M2178.3999999999996 1114.1V1109.5H2200.0V1114.1M2189.2 1109.5V1131.1M2184.6 1131.1H2193.7999999999997" fill="none" stroke="#777" stroke-width="3"/>
<circle cx="2241" cy="1123" r="9.1" fill="#dedede"/>
<path d="M2017.8 1171.2L2021.6 1175L2017.8 1178.8L2014 1175Z" fill="#757575"/><path d="M2021 1175H2025Q2027.5 1175 2029 1172L2031 1168.2M2025 1175Q2027.5 1175 2029 1178L2031 1181.8" fill="none" stroke="#959595" stroke-width="2.3"/><circle cx="2033.3" cy="1168.2" r="3.2" fill="#757575"/><circle cx="2033.3" cy="1181.8" r="3.2" fill="#757575"/>
<text x="2048.9" y="1182.3" font-size="21.8" fill="#555" textLength="106.1" lengthAdjust="spacing">Conditio...</text>
<text x="2239.6" y="1182.4" font-size="21.5" fill="#8a8a8a" textLength="169.4" lengthAdjust="spacing">Rotation of BTN &gt;</text>
<path d="M2018 1203V1259" stroke="#b4b4b4" stroke-width="1.8" fill="none" stroke-dasharray="6 4"/><path d="M2019 1234.5H2033" stroke="#b4b4b4" stroke-width="1.8" fill="none" stroke-dasharray="5.5 4"/>
<text x="2091.4" y="1238.4" font-size="26" fill="#555" textLength="51.0" lengthAdjust="spacing">Te...</text>
<path d="M2053.3999999999996 1225.1V1220.5H2073.0V1225.1M2063.2 1220.5V1240.1M2058.6 1240.1H2067.7999999999997" fill="none" stroke="#777" stroke-width="3"/>
<path d="M2178.3999999999996 1224.1V1219.5H2200.0V1224.1M2189.2 1219.5V1241.1M2184.6 1241.1H2193.7999999999997" fill="none" stroke="#777" stroke-width="3"/>
<circle cx="2241" cy="1233" r="9.1" fill="#dedede"/>
<path d="M2017.8 1281.2L2021.6 1285L2017.8 1288.8L2014 1285Z" fill="#757575"/><path d="M2021 1285H2025Q2027.5 1285 2029 1282L2031 1278.2M2025 1285Q2027.5 1285 2029 1288L2031 1291.8" fill="none" stroke="#959595" stroke-width="2.3"/><circle cx="2033.3" cy="1278.2" r="3.2" fill="#757575"/><circle cx="2033.3" cy="1291.8" r="3.2" fill="#757575"/>
<text x="2048.9" y="1292.3" font-size="21.8" fill="#555" textLength="106.1" lengthAdjust="spacing">Conditio...</text>
<text x="2239.6" y="1292.4" font-size="21.5" fill="#8a8a8a" textLength="169.4" lengthAdjust="spacing">Rotation of BTN &gt;</text>
<path d="M2018 1313V1369" stroke="#b4b4b4" stroke-width="1.8" fill="none" stroke-dasharray="6 4"/><path d="M2019 1344.5H2033" stroke="#b4b4b4" stroke-width="1.8" fill="none" stroke-dasharray="5.5 4"/>
<text x="2091.4" y="1348.4" font-size="26" fill="#555" textLength="51.0" lengthAdjust="spacing">Te...</text>
<path d="M2053.3999999999996 1335.1V1330.5H2073.0V1335.1M2063.2 1330.5V1350.1M2058.6 1350.1H2067.7999999999997" fill="none" stroke="#777" stroke-width="3"/>
<path d="M2178.3999999999996 1334.1V1329.5H2200.0V1334.1M2189.2 1329.5V1351.1M2184.6 1351.1H2193.7999999999997" fill="none" stroke="#777" stroke-width="3"/>
<circle cx="2241" cy="1343" r="9.1" fill="#dedede"/>
<path d="M2017.8 1391.2L2021.6 1395L2017.8 1398.8L2014 1395Z" fill="#757575"/><path d="M2021 1395H2025Q2027.5 1395 2029 1392L2031 1388.2M2025 1395Q2027.5 1395 2029 1398L2031 1401.8" fill="none" stroke="#959595" stroke-width="2.3"/><circle cx="2033.3" cy="1388.2" r="3.2" fill="#757575"/><circle cx="2033.3" cy="1401.8" r="3.2" fill="#757575"/>
<text x="2048.9" y="1402.3" font-size="21.8" fill="#555" textLength="106.1" lengthAdjust="spacing">Conditio...</text>
<text x="2239.6" y="1402.4" font-size="21.5" fill="#8a8a8a" textLength="169.4" lengthAdjust="spacing">Rotation of BTN &gt;</text>
<path d="M2018 1423V1479" stroke="#b4b4b4" stroke-width="1.8" fill="none" stroke-dasharray="6 4"/><path d="M2019 1454.5H2033" stroke="#b4b4b4" stroke-width="1.8" fill="none" stroke-dasharray="5.5 4"/>
<text x="2091.4" y="1458.4" font-size="26" fill="#555" textLength="51.0" lengthAdjust="spacing">Te...</text>
<path d="M2053.3999999999996 1445.1V1440.5H2073.0V1445.1M2063.2 1440.5V1460.1M2058.6 1460.1H2067.7999999999997" fill="none" stroke="#777" stroke-width="3"/>
<path d="M2178.3999999999996 1444.1V1439.5H2200.0V1444.1M2189.2 1439.5V1461.1M2184.6 1461.1H2193.7999999999997" fill="none" stroke="#777" stroke-width="3"/>
<circle cx="2241" cy="1453" r="9.1" fill="#dedede"/>
<path d="M2017.8 1501.2L2021.6 1505L2017.8 1508.8L2014 1505Z" fill="#757575"/><path d="M2021 1505H2025Q2027.5 1505 2029 1502L2031 1498.2M2025 1505Q2027.5 1505 2029 1508L2031 1511.8" fill="none" stroke="#959595" stroke-width="2.3"/><circle cx="2033.3" cy="1498.2" r="3.2" fill="#757575"/><circle cx="2033.3" cy="1511.8" r="3.2" fill="#757575"/>
<text x="2049.9" y="1512.3" font-size="21.8" fill="#555" textLength="95.1" lengthAdjust="spacing">Very_Hi...</text>
<text x="2239.6" y="1512.4" font-size="21.5" fill="#8a8a8a" textLength="169.4" lengthAdjust="spacing">Rotation of BTN &gt;</text>
<path d="M2018 1533V1589" stroke="#b4b4b4" stroke-width="1.8" fill="none" stroke-dasharray="6 4"/><path d="M2019 1564.5H2033" stroke="#b4b4b4" stroke-width="1.8" fill="none" stroke-dasharray="5.5 4"/>
<text x="2091.4" y="1568.4" font-size="26" fill="#555" textLength="51.0" lengthAdjust="spacing">Te...</text>
<path d="M2053.3999999999996 1555.1V1550.5H2073.0V1555.1M2063.2 1550.5V1570.1M2058.6 1570.1H2067.7999999999997" fill="none" stroke="#777" stroke-width="3"/>
<path d="M2178.3999999999996 1554.1V1549.5H2200.0V1554.1M2189.2 1549.5V1571.1M2184.6 1571.1H2193.7999999999997" fill="none" stroke="#777" stroke-width="3"/>
<circle cx="2241" cy="1563" r="9.1" fill="#dedede"/>
<path d="M2018 1594V1611.5H2033" stroke="#b4b4b4" stroke-width="1.8" fill="none" stroke-dasharray="5 4.5"/>
<path d="M2055 1611.3H2071M2063 1603.3V1619.3" stroke="#5a5a5a" stroke-width="2.6" fill="none"/>
<text x="2033.6" y="1698.2" font-size="27" fill="#333" textLength="143.8" lengthAdjust="spacing">Add Trigger</text>
<text x="73.6" y="1816.7" font-size="31" fill="#b4b4b4" stroke="#b4b4b4" stroke-width="0.7">@Gabriela González - Protopie expert</text>
<defs><linearGradient id="desk" x1="0" y1="0" x2="1" y2="0"><stop offset="0" stop-color="#3a488c"/><stop offset="0.3" stop-color="#3f4f94"/><stop offset="0.46" stop-color="#2a3680"/><stop offset="0.55" stop-color="#141a5c"/><stop offset="0.72" stop-color="#141a5c"/><stop offset="0.84" stop-color="#33418a"/><stop offset="1" stop-color="#3f4d92"/></linearGradient></defs>
<path d="M243 1807Q256 1801.6 292 1801.4H560Q580 1801 590 1793.5H2410V1807Z" fill="url(#desk)"/>
</svg>
</body></html>
